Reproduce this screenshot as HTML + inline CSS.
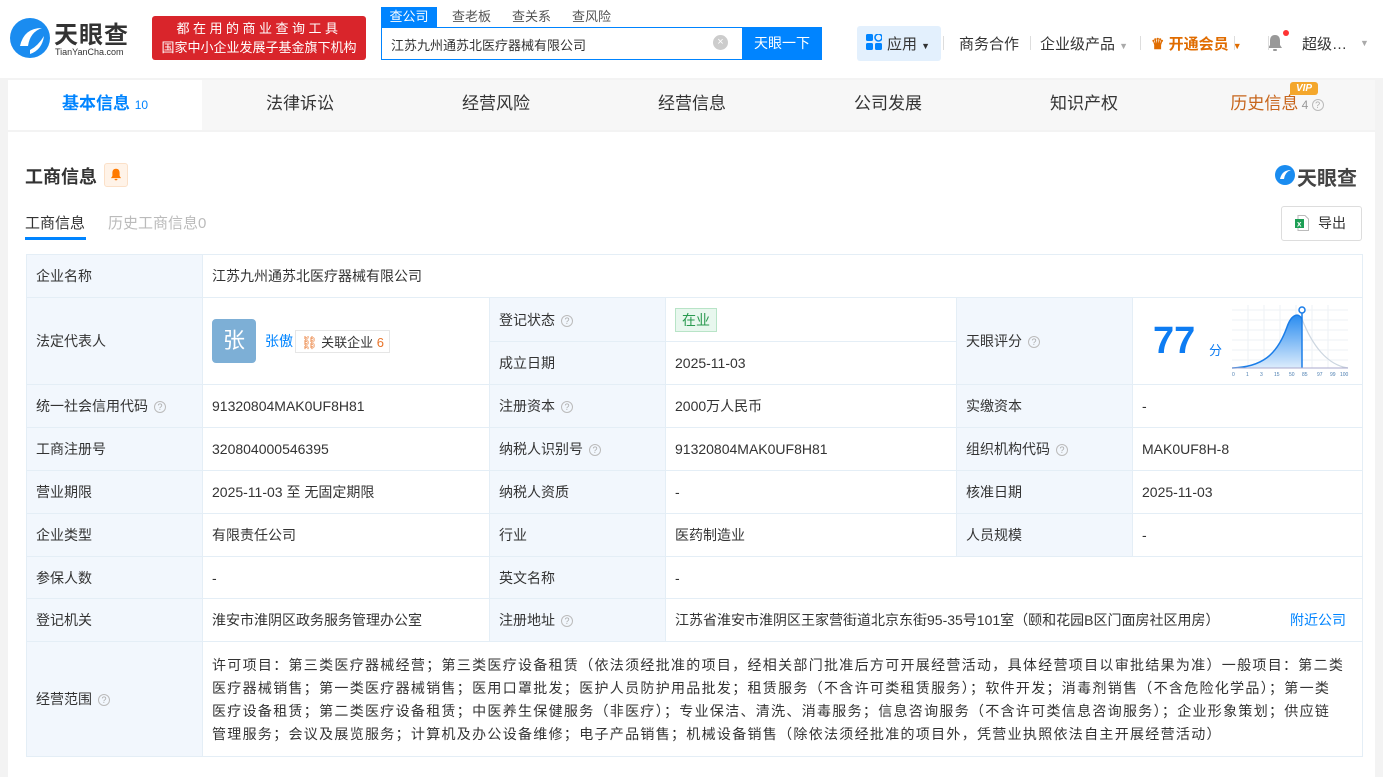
<!DOCTYPE html>
<html><head><meta charset="utf-8"><style>
*{margin:0;padding:0;box-sizing:border-box}
body{width:1383px;height:777px;overflow:hidden;background:#f3f3f3;font-family:"Liberation Sans","Noto Sans CJK SC",sans-serif;color:#333;font-size:14px;position:relative}
.abs{position:absolute}
.hdr{left:0;top:0;width:1383px;height:78px;background:#fff}
.tabs{left:8px;top:80px;width:1367px;height:50px;background:#f7f7f7}
.tabs div{position:absolute;top:0;height:50px;line-height:48px;font-size:17px;color:#333;text-align:center}
.card{left:8px;top:132px;width:1367px;height:645px;background:#fff}
table{position:absolute;left:26px;top:254px;border-collapse:collapse;table-layout:fixed;width:1336px}
td{border:1px solid #e4eef6;padding:0 9px;font-size:14px;color:#333;vertical-align:middle}
td.l{background:#f2f7fd}
.q{display:inline-block;width:12px;height:12px;border:1px solid #bbb;border-radius:50%;font-size:9px;line-height:10px;text-align:center;color:#aaa;margin-left:6px;vertical-align:1px;letter-spacing:0}
.sc{white-space:nowrap;line-height:23px;padding-top:2px;letter-spacing:1.3px;overflow:hidden}
</style></head><body>
<div class="abs hdr"></div>
<svg class="abs" style="left:8px;top:16px" width="44" height="44" viewBox="0 0 44 44"><circle cx="22" cy="22" r="20" fill="#1a8cf0"/><path d="M12 30 Q16 12 34 12 Q22 16 20 30 Z" fill="#fff"/><path d="M22 34 Q30 30 36 20 Q34 34 22 38Z" fill="#fff"/></svg>
<div class="abs" style="left:54px;top:15px;font-size:24px;font-weight:bold;color:#333;letter-spacing:1px">天眼查</div>
<div class="abs" style="left:55px;top:47px;font-size:9px;color:#333">TianYanCha.com</div>
<div class="abs" style="left:152px;top:16px;width:214px;height:44px;background:#d9252b;border-radius:3px;color:#fff;font-size:13px;text-align:center;line-height:19px;padding-top:3px"><div style="letter-spacing:3.5px">都在用的商业查询工具</div><div>国家中小企业发展子基金旗下机构</div></div>
<div class="abs" style="left:381px;top:7px;width:56px;height:20px;background:#0084ff;color:#fff;font-size:13px;text-align:center;line-height:20px">查公司</div>
<div class="abs" style="left:452px;top:7px;font-size:13px;color:#555;line-height:20px">查老板</div>
<div class="abs" style="left:512px;top:7px;font-size:13px;color:#555;line-height:20px">查关系</div>
<div class="abs" style="left:572px;top:7px;font-size:13px;color:#555;line-height:20px">查风险</div>
<div class="abs" style="left:381px;top:27px;width:441px;height:33px;border:1px solid #0084ff;background:#fff"></div>
<div class="abs" style="left:391px;top:35px;font-size:13px;color:#333">江苏九州通苏北医疗器械有限公司</div>
<div class="abs" style="left:713px;top:35px;width:15px;height:15px;border-radius:50%;background:#ccc;color:#fff;font-size:11px;text-align:center;line-height:15px">×</div>
<div class="abs" style="left:742px;top:27px;width:80px;height:33px;background:#0084ff;color:#fff;font-size:14px;text-align:center;line-height:33px">天眼一下</div>
<div class="abs" style="left:857px;top:26px;width:84px;height:35px;background:#e3f0fd;border-radius:3px"></div>
<svg class="abs" style="left:866px;top:34px" width="16" height="16"><rect x="0" y="0" width="7" height="7" rx="1.5" fill="#0084ff"/><rect x="9" y="0" width="7" height="7" rx="3.5" fill="none" stroke="#0084ff" stroke-width="1.6"/><rect x="0" y="9" width="7" height="7" rx="1.5" fill="#0084ff"/><rect x="9" y="9" width="7" height="7" rx="1.5" fill="#0084ff"/></svg>
<div class="abs" style="left:887px;top:33px;font-size:15px;color:#333">应用 <span style="font-size:9px">▼</span></div>
<div class="abs" style="left:959px;top:33px;font-size:15px;color:#333">商务合作</div>
<div class="abs" style="left:1040px;top:33px;font-size:15px;color:#333">企业级产品 <span style="font-size:9px;color:#aaa">▼</span></div>
<div class="abs" style="left:1151px;top:33px;font-size:15px;color:#e06c00;font-weight:bold">♛ 开通会员 <span style="font-size:9px">▼</span></div>
<svg class="abs" style="left:1267px;top:34px" width="16" height="18" viewBox="0 0 16 18"><path d="M8 1 C4 1 3 4 3 7 V11 L1 14 H15 L13 11 V7 C13 4 12 1 8 1Z" fill="#999"/><rect x="6" y="15" width="4" height="2" rx="1" fill="#999"/></svg>
<div class="abs" style="left:1283px;top:30px;width:6px;height:6px;border-radius:50%;background:#f33"></div>
<div class="abs" style="left:1302px;top:33px;font-size:15px;color:#333">超级…</div>
<div class="abs" style="left:1360px;top:38px;font-size:9px;color:#aaa">▼</div>
<div class="abs" style="left:943px;top:36px;width:1px;height:14px;background:#ddd"></div>
<div class="abs" style="left:1030px;top:36px;width:1px;height:14px;background:#ddd"></div>
<div class="abs" style="left:1140px;top:36px;width:1px;height:14px;background:#ddd"></div>
<div class="abs" style="left:1234px;top:36px;width:1px;height:14px;background:#ddd"></div>
<div class="abs" style="left:1268px;top:36px;width:1px;height:14px;background:#ddd"></div>

<div class="abs tabs">
<div style="left:0;width:194px;background:#fff;color:#0084ff;font-weight:bold">基本信息 <span style="font-size:12px;font-weight:normal">10</span></div>
<div style="left:194px;width:196px">法律诉讼</div>
<div style="left:390px;width:196px">经营风险</div>
<div style="left:586px;width:196px">经营信息</div>
<div style="left:782px;width:196px">公司发展</div>
<div style="left:978px;width:196px">知识产权</div>
<div style="left:1174px;width:190px;color:#c7651b">历史信息<span style="font-size:12px;color:#999"> 4 <span class="q" style="margin:0">?</span></span></div>
<div style="left:1282px;top:2px;height:13px;width:28px;line-height:13px;background:#f4a72c;color:#fff;font-size:10px;font-weight:bold;font-style:italic;border-radius:3px 3px 3px 0">VIP</div>
</div>

<div class="abs card"></div>
<div class="abs" style="left:25px;top:163px;font-size:18px;font-weight:bold;color:#333">工商信息</div>
<div class="abs" style="left:104px;top:163px;width:24px;height:24px;background:#fff3e8;border:1px solid #fbe0c8;border-radius:3px"></div>
<svg class="abs" style="left:110px;top:168px" width="12" height="13" viewBox="0 0 16 18"><path d="M8 1 C4 1 3 4 3 7 V11 L1 14 H15 L13 11 V7 C13 4 12 1 8 1Z" fill="#ff7a00"/><rect x="6" y="15" width="4" height="2" rx="1" fill="#ff7a00"/></svg>
<svg class="abs" style="left:1274px;top:164px" width="22" height="22" viewBox="0 0 44 44"><circle cx="22" cy="22" r="20" fill="#1a8cf0"/><path d="M12 30 Q16 12 34 12 Q22 16 20 30 Z" fill="#fff"/></svg>
<div class="abs" style="left:1297px;top:162px;font-size:20px;font-weight:bold;color:#444">天眼查</div>
<div class="abs" style="left:25px;top:212px;font-size:15px;color:#333">工商信息</div>
<div class="abs" style="left:25px;top:237px;width:61px;height:3px;background:#0084ff"></div>
<div class="abs" style="left:108px;top:212px;font-size:15px;color:#bbb">历史工商信息0</div>
<div class="abs" style="left:1281px;top:206px;width:81px;height:35px;border:1px solid #ddd;border-radius:3px;font-size:14px;line-height:33px;padding-left:36px;color:#333">导出</div>
<svg class="abs" style="left:1295px;top:215px" width="14" height="16"><path d="M3 .5H10L13.5 4V15.5H3Z" fill="#fff" stroke="#bbb"/><rect x="0" y="4" width="9" height="9" fill="#1d9f55"/><text x="2" y="11.5" font-size="8" fill="#fff" font-family="Liberation Sans" font-weight="bold">x</text></svg>

<table>
<colgroup><col style="width:176px"><col style="width:287px"><col style="width:176px"><col style="width:291px"><col style="width:176px"><col style="width:230px"></colgroup>
<tr style="height:43px"><td class="l">企业名称</td><td colspan="5">江苏九州通苏北医疗器械有限公司</td></tr>
<tr style="height:44px"><td class="l" rowspan="2">法定代表人</td><td rowspan="2"><span style="display:inline-block;width:44px;height:44px;background:#7dafd6;border-radius:4px;color:#fff;font-size:22px;text-align:center;line-height:44px;vertical-align:middle">张</span><span style="color:#0084ff;margin-left:9px;vertical-align:middle">张傲</span><span style="display:inline-block;border:1px solid #e6e6e6;font-size:13px;padding:1px 5px;margin-left:2px;vertical-align:middle"><span style="color:#e8742a">⛓</span> 关联企业 <span style="color:#e8742a">6</span></span></td><td class="l">登记状态<span class="q">?</span></td><td><span style="display:inline-block;background:#e8f7ee;border:1px solid #b8e4c7;color:#2a9a50;padding:1px 6px;font-size:14px">在业</span></td><td class="l" rowspan="2">天眼评分<span class="q">?</span></td><td rowspan="2" style="position:relative"><span style="position:absolute;left:20px;top:22px;font-size:38px;font-weight:bold;color:#0d7cf2">77</span><span style="position:absolute;left:76px;top:42px;font-size:13px;color:#0d7cf2">分</span>
<svg style="position:absolute;left:99px;top:7px" width="118" height="72" viewBox="0 0 118 72"><defs><linearGradient id="g" x1="0" y1="0" x2="0" y2="1"><stop offset="0" stop-color="#2a8cf0"/><stop offset="1" stop-color="#dcecfc"/></linearGradient></defs><g stroke="#eef2f6" stroke-width="1"><path d="M0 5H116M0 15H116M0 25H116M0 35H116M0 45H116M0 55H116M16 0V63M32 0V63M48 0V63M64 0V63M80 0V63M96 0V63"/></g><path d="M0 63 C30 62 45 50 55 22 C60 8 67 8 70 14 L70 63Z" fill="url(#g)"/><path d="M0 63 C30 62 45 50 55 22 C60 8 67 8 70 14" fill="none" stroke="#1a7de8" stroke-width="1.5"/><path d="M70 14 C80 40 95 60 116 63" fill="none" stroke="#ccd6e0" stroke-width="1.2"/><line x1="70" y1="6" x2="70" y2="63" stroke="#1a7de8" stroke-width="1.5"/><circle cx="70" cy="5" r="3" fill="#fff" stroke="#1a7de8" stroke-width="1.5"/><line x1="0" y1="63" x2="116" y2="63" stroke="#aac" stroke-width="1"/><text y="71" font-size="5" fill="#4a7db0" font-family="Liberation Sans"><tspan x="0">0</tspan><tspan x="14">1</tspan><tspan x="28">3</tspan><tspan x="42">15</tspan><tspan x="57">50</tspan><tspan x="70">85</tspan><tspan x="85">97</tspan><tspan x="98">99</tspan><tspan x="108">100</tspan></text></svg></td></tr>
<tr style="height:43px"><td class="l">成立日期</td><td>2025-11-03</td></tr>
<tr style="height:43px"><td class="l">统一社会信用代码<span class="q">?</span></td><td>91320804MAK0UF8H81</td><td class="l">注册资本<span class="q">?</span></td><td>2000万人民币</td><td class="l">实缴资本</td><td>-</td></tr>
<tr style="height:43px"><td class="l">工商注册号</td><td>320804000546395</td><td class="l">纳税人识别号<span class="q">?</span></td><td>91320804MAK0UF8H81</td><td class="l">组织机构代码<span class="q">?</span></td><td>MAK0UF8H-8</td></tr>
<tr style="height:43px"><td class="l">营业期限</td><td>2025-11-03 至 无固定期限</td><td class="l">纳税人资质</td><td>-</td><td class="l">核准日期</td><td>2025-11-03</td></tr>
<tr style="height:43px"><td class="l">企业类型</td><td>有限责任公司</td><td class="l">行业</td><td>医药制造业</td><td class="l">人员规模</td><td>-</td></tr>
<tr style="height:42px"><td class="l">参保人数</td><td>-</td><td class="l">英文名称</td><td colspan="3">-</td></tr>
<tr style="height:43px"><td class="l">登记机关</td><td>淮安市淮阴区政务服务管理办公室</td><td class="l">注册地址<span class="q">?</span></td><td colspan="3">江苏省淮安市淮阴区王家营街道北京东街95-35号101室（颐和花园B区门面房社区用房）<span style="float:right;color:#0084ff;margin-right:7px">附近公司</span></td></tr>
<tr style="height:115px"><td class="l">经营范围<span class="q">?</span></td><td colspan="5" class="sc">许可项目：第三类医疗器械经营；第三类医疗设备租赁（依法须经批准的项目，经相关部门批准后方可开展经营活动，具体经营项目以审批结果为准）一般项目：第二类<br>医疗器械销售；第一类医疗器械销售；医用口罩批发；医护人员防护用品批发；租赁服务（不含许可类租赁服务）；软件开发；消毒剂销售（不含危险化学品）；第一类<br>医疗设备租赁；第二类医疗设备租赁；中医养生保健服务（非医疗）；专业保洁、清洗、消毒服务；信息咨询服务（不含许可类信息咨询服务）；企业形象策划；供应链<br>管理服务；会议及展览服务；计算机及办公设备维修；电子产品销售；机械设备销售（除依法须经批准的项目外，凭营业执照依法自主开展经营活动）</td></tr>
</table>
</body></html>
